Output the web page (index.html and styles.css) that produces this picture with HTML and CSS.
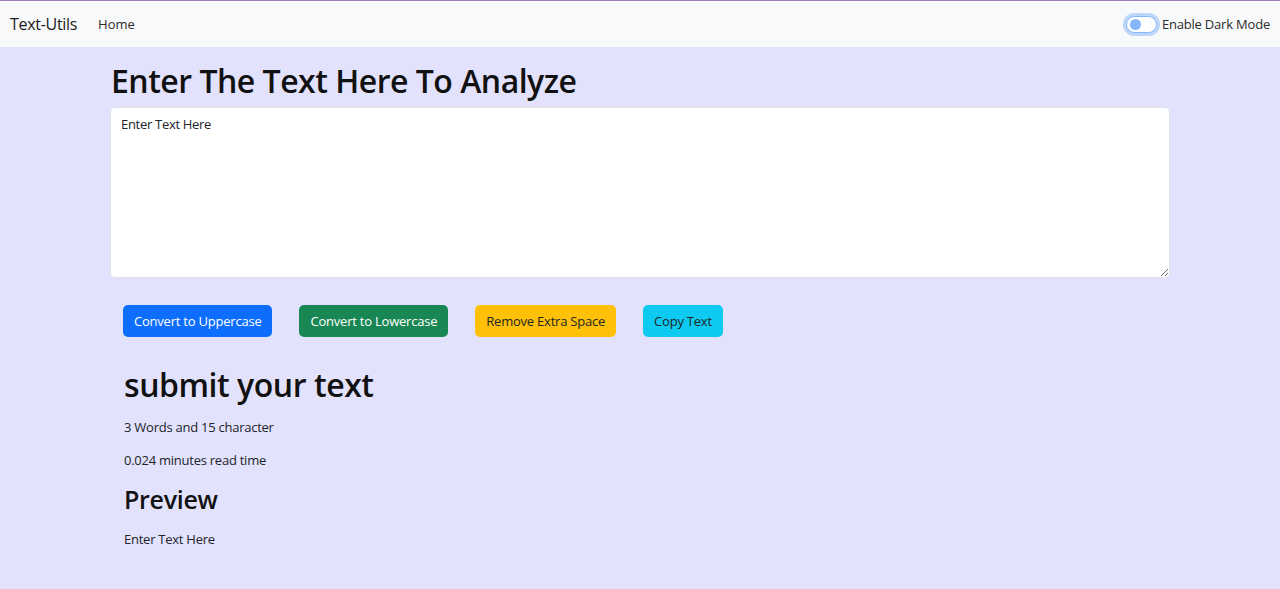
FILE: index.html
```html
<!DOCTYPE html>
<html lang="en">
<head>
<meta charset="utf-8">
<title>Text-Utils</title>
<link rel="stylesheet" href="styles.css">
</head>
<body>
<nav class="navbar">
  <a class="brand" href="#">Text-Utils</a>
  <a class="nav-link" href="#">Home</a>
  <div class="spacer"></div>
  <label class="switch">
    <span class="switch-track"><span class="switch-knob"></span></span>
    <span class="switch-label">Enable Dark Mode</span>
  </label>
</nav>
<main class="main">
  <h1 class="title">Enter The Text Here To Analyze</h1>
  <textarea class="textbox">Enter Text Here</textarea>
  <div class="actions">
    <button class="btn btn-primary">Convert to Uppercase</button>
    <button class="btn btn-success">Convert to Lowercase</button>
    <button class="btn btn-warning">Remove Extra Space</button>
    <button class="btn btn-info">Copy Text</button>
  </div>
  <section class="summary">
    <h2 class="summary-title">submit your text</h2>
    <p class="stat">3 Words and 15 character</p>
    <p class="stat">0.024 minutes read time</p>
    <h3 class="preview-title">Preview</h3>
    <p class="stat">Enter Text Here</p>
  </section>
</main>
</body>
</html>
```
FILE: styles.css
```css
* { box-sizing: border-box; }
body {
  margin: 0;
  background: #e3e2fd;
  font-family: "Open Sans", "Noto Sans", sans-serif;
  color: #212529;
}
.navbar {
  display: flex;
  align-items: center;
  height: 47px;
  border-top: 1px solid #9a7fb5;
  background: #f8f9fa;
  padding: 0 10px;
}
.brand {
  font-size: 16px;
  letter-spacing: -0.3px;
  color: #1b1b1b;
  text-decoration: none;
  margin-right: 21px;
}
.nav-link {
  font-size: 13px;
  color: #2b2b2b;
  text-decoration: none;
}
.spacer { flex: 1; }
.switch {
  display: flex;
  align-items: center;
  gap: 5px;
}
.switch-track {
  width: 31px;
  height: 17px;
  border-radius: 9px;
  border: 1px solid #86b7fe;
  background: #fff;
  box-shadow: 0 0 0 3px rgba(13, 110, 253, 0.25);
  display: flex;
  align-items: center;
  padding-left: 3px;
}
.switch-knob {
  width: 11px;
  height: 11px;
  border-radius: 50%;
  background: #86b7fe;
}
.switch-label {
  font-size: 13px;
  letter-spacing: -0.2px;
  color: #2b2b2b;
}
.main {
  width: 1060px;
  margin: 0 auto;
  padding-top: 14px;
}
.title {
  font-size: 32px;
  font-weight: 600;
  letter-spacing: -0.5px;
  line-height: 1.25;
  margin: 0 0 6px 1px;
  color: #111;
}
.textbox {
  display: block;
  width: 100%;
  height: 171px;
  border: 1px solid #dee2e6;
  border-radius: 5px;
  background: #fff;
  padding: 7px 10px;
  font-family: inherit;
  font-size: 13px;
  letter-spacing: -0.3px;
  color: #212529;
  resize: vertical;
}
.actions {
  display: flex;
  gap: 27px;
  padding: 27px 13px 0;
}
.btn {
  height: 32px;
  border: 1px solid transparent;
  border-radius: 5px;
  padding: 0 10px;
  font-family: inherit;
  font-size: 13px;
  letter-spacing: -0.22px;
  color: #fff;
}
.btn-primary { background: #0d6efd; }
.btn-success { background: #198754; }
.btn-warning { background: #ffc107; color: #212529; }
.btn-info { background: #0dcaf0; color: #212529; }
.summary {
  padding: 29px 14px 0;
}
.summary-title {
  font-size: 32px;
  font-weight: 600;
  letter-spacing: -0.45px;
  line-height: 1.2;
  margin: 0 0 14px;
  color: #111;
}
.stat {
  font-size: 13px;
  letter-spacing: -0.25px;
  margin: 0 0 15px;
}
.preview-title {
  font-size: 25px;
  font-weight: 600;
  letter-spacing: -0.3px;
  line-height: 1.2;
  margin: 0 0 16px;
  color: #111;
}
```
